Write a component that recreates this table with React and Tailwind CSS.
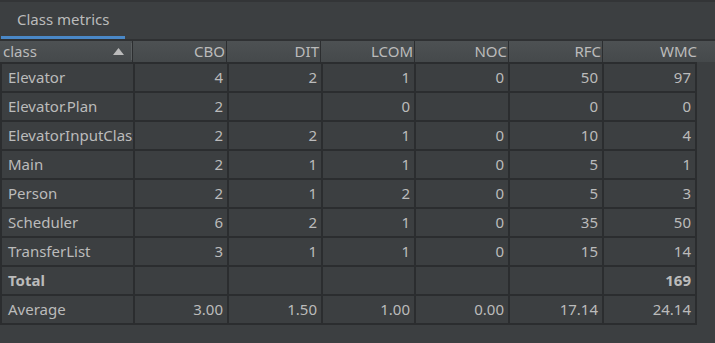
import React from "react";

const cols = ["CBO", "DIT", "LCOM", "NOC", "RFC", "WMC"];
const rows = [
  ["Elevator", "4", "2", "1", "0", "50", "97"],
  ["Elevator.Plan", "2", "", "0", "", "0", "0"],
  ["ElevatorInputClass", "2", "2", "1", "0", "10", "4"],
  ["Main", "2", "1", "1", "0", "5", "1"],
  ["Person", "2", "1", "2", "0", "5", "3"],
  ["Scheduler", "6", "2", "1", "0", "35", "50"],
  ["TransferList", "3", "1", "1", "0", "15", "14"],
];

const gridCols = "grid grid-cols-[131px_92px_92px_91px_92px_92px_91px] gap-[2px]";

export default function App() {
  return (
    <div
      className="w-[715px] h-[343px] bg-[#3c3f41] text-[#bbbbbb] overflow-hidden flex flex-col"
      style={{ fontFamily: '"Noto Sans", "Open Sans", sans-serif' }}
    >
      {/* tab bar */}
      <div className="h-[2px] bg-[#333537]" />
      <div className="h-[37px] flex items-end">
        <div className="w-[125px] pl-[1px] flex flex-col">
          <div className="h-[34px] flex items-center pl-[16px] text-[15px]">Class metrics</div>
          <div className="h-[3px] bg-[#4a88c7]" />
        </div>
      </div>
      <div className="h-[2px] bg-[#2f3133]" />
      {/* header */}
      <div className="h-[21px] bg-gradient-to-b from-[#4d5153] to-[#45494b] flex text-[15px] leading-[21px]">
        <div className="w-[133px] pl-[3px] flex items-center justify-between pr-[8px] border-r border-[#2c2e30] relative">
          <span>class</span>
          <svg width="11" height="7" viewBox="0 0 11 7">
            <polygon points="5.5,0 11,7 0,7" fill="#bbbbbb" />
          </svg>
          <div className="absolute right-0 top-[2px] bottom-[2px] w-[1px] bg-[#5b5f61]" />
        </div>
        {cols.map((c, i) => (
          <div
            key={c}
            className={
              i === 5
                ? "flex-1 pl-[1px] pr-[18px] text-right w-[113px]"
                : "w-[94px] text-right pr-[1px] border-r border-[#2c2e30] relative"
            }
          >
            {c}
          </div>
        ))}
      </div>
      {/* body */}
      <div className="w-[697px] bg-[#2b2d2f] pt-[2px] px-[2px] pb-[2px]">
        <div className={gridCols + " text-[15px]"}>
          {rows.map((r) => (
            <React.Fragment key={r[0]}>
              <div className="h-[27px] bg-[#3c3f41] pl-[6px] leading-[27px] whitespace-nowrap overflow-hidden">{r[0]}</div>
              {r.slice(1).map((v, j) => (
                <div key={j} className="h-[27px] bg-[#3c3f41] pr-[4px] text-right leading-[27px]">{v}</div>
              ))}
            </React.Fragment>
          ))}
          <div className="h-[27px] bg-[#3c3f41] pl-[6px] leading-[27px] font-bold">Total</div>
          {["", "", "", "", "", "169"].map((v, j) => (
            <div key={j} className="h-[27px] bg-[#3c3f41] pr-[4px] text-right leading-[27px] font-bold">{v}</div>
          ))}
          <div className="h-[27px] bg-[#3c3f41] pl-[6px] leading-[27px]">Average</div>
          {["3.00", "1.50", "1.00", "0.00", "17.14", "24.14"].map((v, j) => (
            <div key={j} className="h-[27px] bg-[#3c3f41] pr-[4px] text-right leading-[27px]">{v}</div>
          ))}
        </div>
      </div>
    </div>
  );
}
